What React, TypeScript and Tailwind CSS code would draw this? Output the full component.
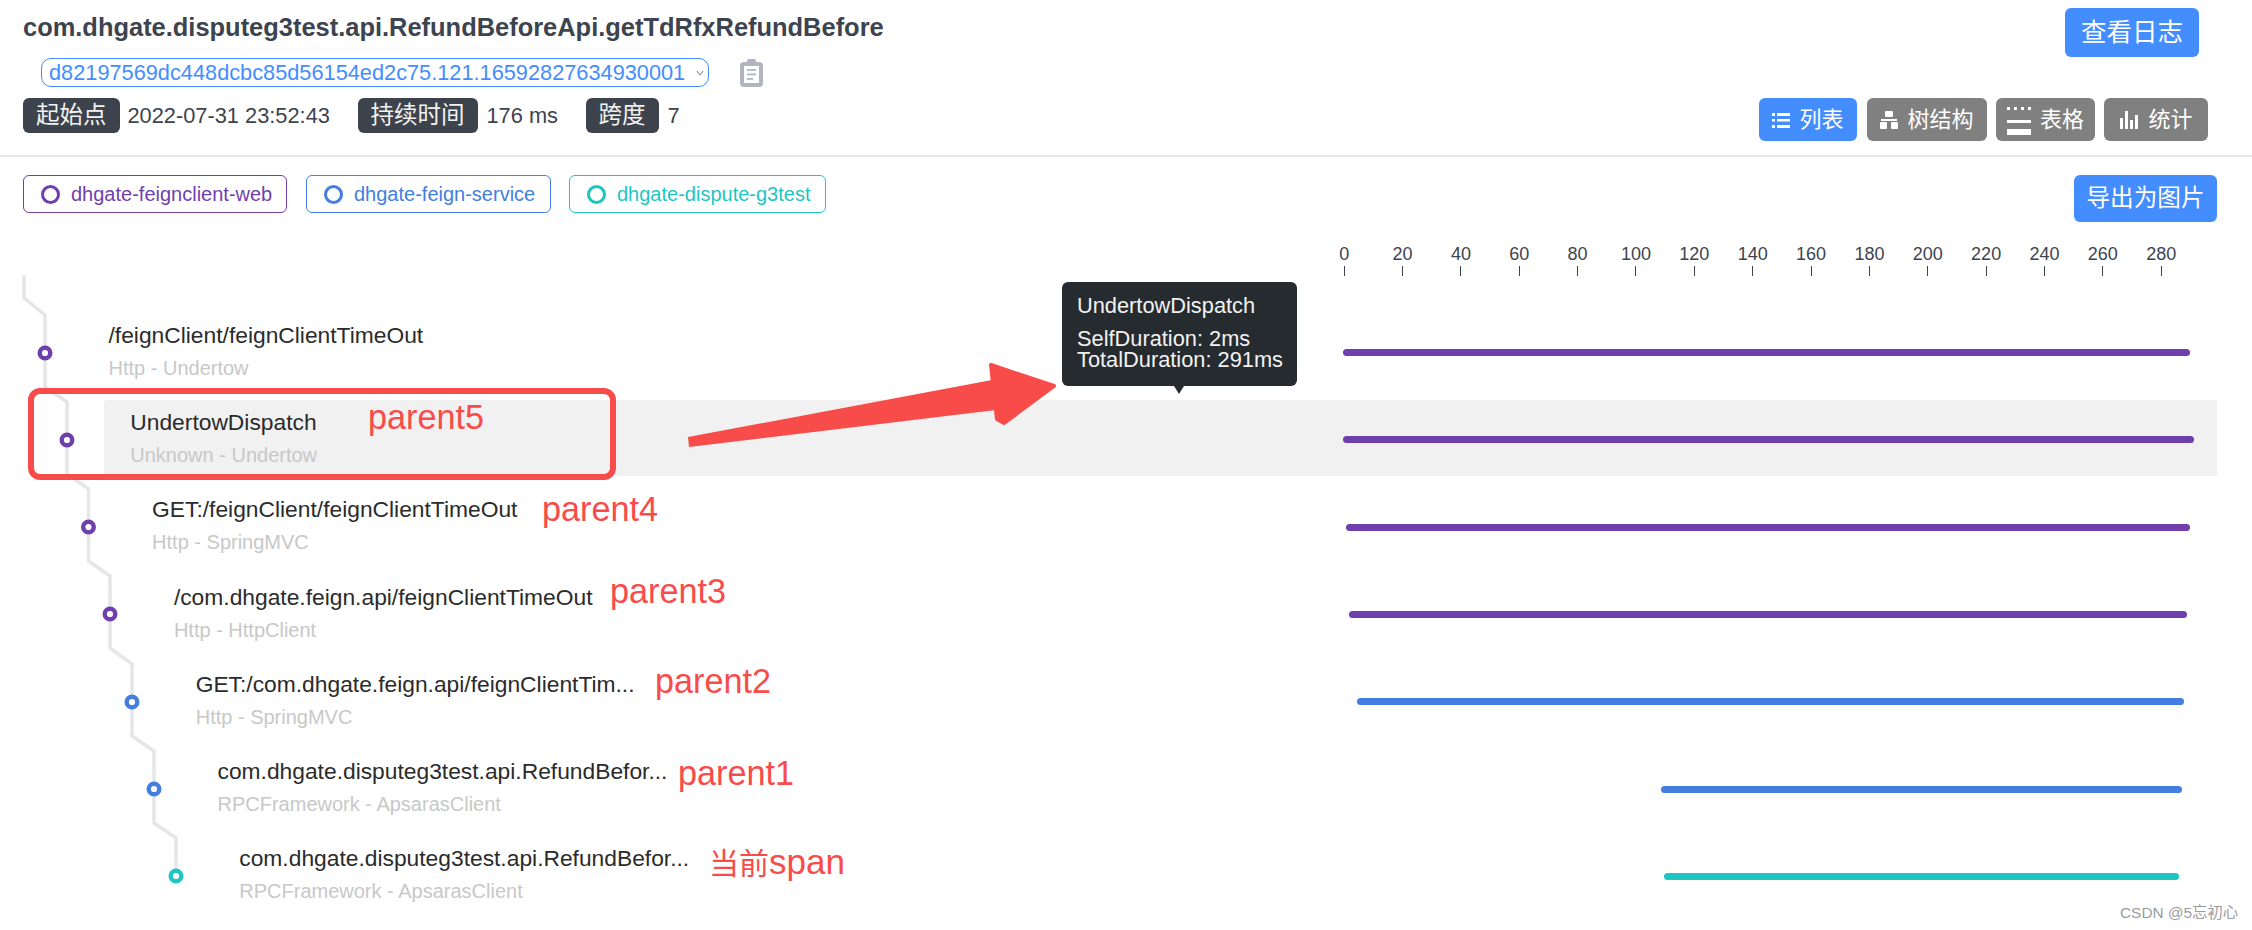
const SANS = "font-['Liberation_Sans','Noto_Sans_CJK_SC',sans-serif]";

const rows = [
  { title: "/feignClient/feignClientTimeOut", sub: "Http - Undertow", color: "#6f3fae", left: 1343, right: 2190 },
  { title: "UndertowDispatch", sub: "Unknown - Undertow", color: "#6f3fae", left: 1343, right: 2194, active: true },
  { title: "GET:/feignClient/feignClientTimeOut", sub: "Http - SpringMVC", color: "#6f3fae", left: 1346, right: 2190 },
  { title: "/com.dhgate.feign.api/feignClientTimeOut", sub: "Http - HttpClient", color: "#6f3fae", left: 1349, right: 2187 },
  { title: "GET:/com.dhgate.feign.api/feignClientTim...", sub: "Http - SpringMVC", color: "#437ee0", left: 1357, right: 2184 },
  { title: "com.dhgate.disputeg3test.api.RefundBefor...", sub: "RPCFramework - ApsarasClient", color: "#437ee0", left: 1661, right: 2182 },
  { title: "com.dhgate.disputeg3test.api.RefundBefor...", sub: "RPCFramework - ApsarasClient", color: "#1ec6c1", left: 1664, right: 2179 },
];

const ticks = [0, 20, 40, 60, 80, 100, 120, 140, 160, 180, 200, 220, 240, 260, 280];

const notes = [
  { text: "parent5", cls: "left-[368px] top-[397px]" },
  { text: "parent4", cls: "left-[542px] top-[489px]" },
  { text: "parent3", cls: "left-[610px] top-[571px]" },
  { text: "parent2", cls: "left-[655px] top-[661px]" },
  { text: "parent1", cls: "left-[678px] top-[753px]" },
];

function Tag({ children }: { children: React.ReactNode }) {
  return (
    <span className="flex h-[35px] items-center rounded-[6px] bg-[#3d434c] px-[13px] text-[23.5px] leading-none text-[#f2f2f2]">
      {children}
    </span>
  );
}

function Legend({ label, color, cls }: { label: string; color: string; cls: string }) {
  return (
    <div className={`flex h-[38px] items-center rounded-[6px] border pl-[17px] ${cls}`} style={{ borderColor: color, color }}>
      <span className="mr-[11px] h-[19px] w-[19px] shrink-0 rounded-full border-[3px]" style={{ borderColor: color }} />
      <span className="whitespace-nowrap text-[20px] leading-none">{label}</span>
    </div>
  );
}

function ViewButton({ label, active, icon, cls }: { label: string; active?: boolean; icon: React.ReactNode; cls: string }) {
  return (
    <div className={`flex h-[43px] items-center justify-center gap-[9px] rounded-[6px] text-[22px] leading-none text-white ${active ? "bg-[#448dfe]" : "bg-[#808080]"} ${cls}`}>
      {icon}
      <span>{label}</span>
    </div>
  );
}

const ListIcon = (
  <svg width="18" height="18" viewBox="0 0 18 18" fill="white">
    <rect x="0" y="2" width="3" height="3" /><rect x="5" y="2" width="13" height="3" />
    <rect x="0" y="8" width="3" height="2.5" /><rect x="5" y="8" width="13" height="2.5" />
    <rect x="0" y="14" width="3" height="3" /><rect x="5" y="14" width="13" height="3" />
  </svg>
);
const TreeIcon = (
  <svg width="18" height="20" viewBox="0 0 18 20" fill="white">
    <rect x="5" y="1" width="8" height="6" rx="1" /><rect x="1" y="9" width="16" height="2" />
    <rect x="0" y="12" width="7" height="7" rx="1" /><rect x="11" y="12" width="7" height="7" rx="1" />
  </svg>
);
const TableIcon = (
  <svg width="24" height="30" viewBox="0 0 24 30" fill="white">
    <rect x="0" y="2" width="3" height="3" /><rect x="7" y="2" width="3" height="3" />
    <rect x="14" y="2" width="3" height="3" /><rect x="21" y="2" width="3" height="3" />
    <rect x="0" y="15" width="24" height="3" /><rect x="0" y="24" width="24" height="6" />
  </svg>
);
const ChartIcon = (
  <svg width="20" height="20" viewBox="0 0 20 20" fill="white">
    <rect x="1" y="8" width="3" height="11" /><rect x="6" y="1" width="3" height="18" />
    <rect x="11" y="10" width="3" height="9" /><rect x="16" y="5" width="3" height="14" />
  </svg>
);

function TreeLines() {
  const xs = [45, 67, 88.5, 110, 132, 154, 176];
  const ys = [353, 440, 527, 614, 702, 789, 876];
  const points = ["24,275", "24,298"];
  xs.forEach((x, i) => {
    points.push(`${x},${ys[i] - 38}`);
    if (i < 6) points.push(`${x},${ys[i] + 34}`);
    else points.push(`${x},${ys[i]}`);
  });
  return (
    <svg className="absolute left-0 top-0" width="200" height="900" fill="none">
      <polyline points={points.join(" ")} stroke="#e6e6e6" strokeWidth="3.5" />
      {xs.map((x, i) => (
        <circle key={x} cx={x} cy={ys[i]} r="5.3" fill="white" stroke={rows[i].color} strokeWidth="4.4" />
      ))}
    </svg>
  );
}

export default function App() {
  return (
    <div className={`relative h-[930px] w-[2252px] overflow-hidden bg-white ${SANS}`}>
      <header className="flex h-[157px] justify-between border-b-2 border-[#e6e6e6] pl-[23px] pr-[44px]">
        <div>
          <h1 className="mt-[12px] h-[30px] whitespace-nowrap text-[25.45px] font-bold leading-[30px] text-[#3d444f]">
            com.dhgate.disputeg3test.api.RefundBeforeApi.getTdRfxRefundBefore
          </h1>
          <div className="ml-[18px] mt-[16px] flex items-center">
            <div className="flex h-[29px] w-[668px] items-center justify-between rounded-[10px] border border-[#448dfe] pl-[7px] pr-[4px] text-[21.75px] leading-none text-[#448dfe]">
              <span className="whitespace-nowrap">d82197569dc448dcbc85d56154ed2c75.121.16592827634930001</span>
              <svg width="8" height="6" viewBox="0 0 9 6" fill="none" stroke="#8a8f98" strokeWidth="1.2">
                <path d="M1 1l3.5 4L8 1" />
              </svg>
            </div>
            <svg className="ml-[31px]" width="23" height="28" viewBox="0 0 23 28">
              <rect x="0" y="3" width="23" height="25" rx="4" fill="#b0b5c0" />
              <rect x="7" y="0" width="9" height="6" rx="2" fill="#b0b5c0" />
              <rect x="4" y="7" width="15" height="17" fill="white" />
              <rect x="7" y="10" width="9" height="1.8" fill="#b0b5c0" />
              <rect x="7" y="14.5" width="9" height="1.8" fill="#b0b5c0" />
              <rect x="7" y="19" width="6" height="1.8" fill="#b0b5c0" />
            </svg>
          </div>
          <div className="mt-[11px] flex items-center text-[21.8px] leading-none text-[#3d444f]">
            <Tag>起始点</Tag>
            <span className="ml-[8px] w-[230px]">2022-07-31 23:52:43</span>
            <Tag>持续时间</Tag>
            <span className="ml-[9px] w-[99px]">176 ms</span>
            <Tag>跨度</Tag>
            <span className="ml-[9px]">7</span>
          </div>
        </div>
        <div className="flex flex-col items-end pt-[8px]">
          <div className="mr-[9px] flex h-[49px] w-[134px] items-center justify-center rounded-[6px] bg-[#448dfe] text-[25.5px] leading-none text-white">
            查看日志
          </div>
          <div className="mt-[41px] flex">
            <ViewButton label="列表" active icon={ListIcon} cls="w-[98px]" />
            <ViewButton label="树结构" icon={TreeIcon} cls="ml-[10px] w-[120px]" />
            <ViewButton label="表格" icon={TableIcon} cls="ml-[9px] w-[99px] gap-[5px]" />
            <ViewButton label="统计" icon={ChartIcon} cls="ml-[9px] w-[104px]" />
          </div>
        </div>
      </header>

      <section className="flex items-start justify-between pl-[23px] pr-[35px] pt-[18px]">
        <div className="flex">
          <Legend label="dhgate-feignclient-web" color="#6f3fae" cls="w-[264px]" />
          <Legend label="dhgate-feign-service" color="#437ee0" cls="ml-[19px] w-[245px]" />
          <Legend label="dhgate-dispute-g3test" color="#1ec6c1" cls="ml-[18px] w-[257px]" />
        </div>
        <div className="flex h-[47px] w-[143px] items-center justify-center rounded-[6px] bg-[#448dfe] text-[23.6px] leading-none text-white">
          导出为图片
        </div>
      </section>

      <div className="ml-[1315px] mt-[21px] flex">
        {ticks.map((t) => (
          <div key={t} className="flex w-[58.36px] flex-col items-center text-[18px] leading-[22px] text-[#3d444f]">
            <span>{t}</span>
            <span className="mt-[1px] h-[10px] w-[1px] bg-[#3d444f]" />
          </div>
        ))}
      </div>

      <div className="mt-[36.7px]">
        {rows.map((r, i) => (
          <div key={i} className="mb-[11.3px] flex h-[76px]">
            <div className="shrink-0" style={{ width: 82 + i * 21.8 }} />
            <div className={`mr-[35px] flex flex-1 rounded-l-[3px] ${r.active ? "bg-[#f1f1f1]" : ""}`}>
              <div className="flex-1 pl-[26.5px] pt-[9px]">
                <div className="h-[26px] whitespace-nowrap text-[22.8px] leading-[26px] text-[#2b2b2b]">{r.title}</div>
                <div className="mt-[7px] h-[26px] whitespace-nowrap text-[20px] leading-[26px] text-[#c8c8c8]">{r.sub}</div>
              </div>
              <div className="flex w-[887px] shrink-0 items-center">
                <div
                  className="mt-[4px] h-[7px] rounded-full"
                  style={{ marginLeft: r.left - 1330, width: r.right - r.left, backgroundColor: r.color }}
                />
              </div>
            </div>
          </div>
        ))}
      </div>

      <TreeLines />

      <div className="absolute left-[1062px] top-[282px] h-[104px] w-[235px] rounded-[6px] bg-[#262b2f] pl-[15px] pt-[12px] text-[21.8px] leading-[21px] text-[#f2f2f2]">
        <div className="mb-[10px] leading-[24px]">UndertowDispatch</div>
        <div>SelfDuration: 2ms</div>
        <div>TotalDuration: 291ms</div>
        <span className="absolute left-[112px] top-full h-0 w-0 border-x-[5px] border-t-[8px] border-x-transparent border-t-[#262b2f]" />
      </div>

      <svg className="absolute left-[680px] top-[355px]" width="390" height="100" viewBox="680 355 390 100">
        <polygon points="688,437 992,380 996,410 689,447" fill="#f74c49" />
        <polygon points="991,365 1054,386 1004,423 997,419" fill="#f74c49" stroke="#f74c49" strokeWidth="4" strokeLinejoin="round" />
      </svg>

      <div className="absolute left-[28px] top-[388px] h-[92px] w-[588px] rounded-[12px] border-[6px] border-[#f74c49]" />

      {notes.map((n) => (
        <div key={n.text} className={`absolute whitespace-nowrap text-[34.2px] leading-[40px] text-[#f74c49] ${n.cls}`}>
          {n.text}
        </div>
      ))}
      <div className="absolute left-[709px] top-[842px] whitespace-nowrap text-[35px] leading-[40px] text-[#f74c49]">
        <span className="text-[30px]">当前</span>span
      </div>

      <div className="absolute left-[2120px] top-[904px] whitespace-nowrap text-[15.4px] leading-[18px] text-[#9c9c9c]">
        CSDN @5忘初心
      </div>
    </div>
  );
}
